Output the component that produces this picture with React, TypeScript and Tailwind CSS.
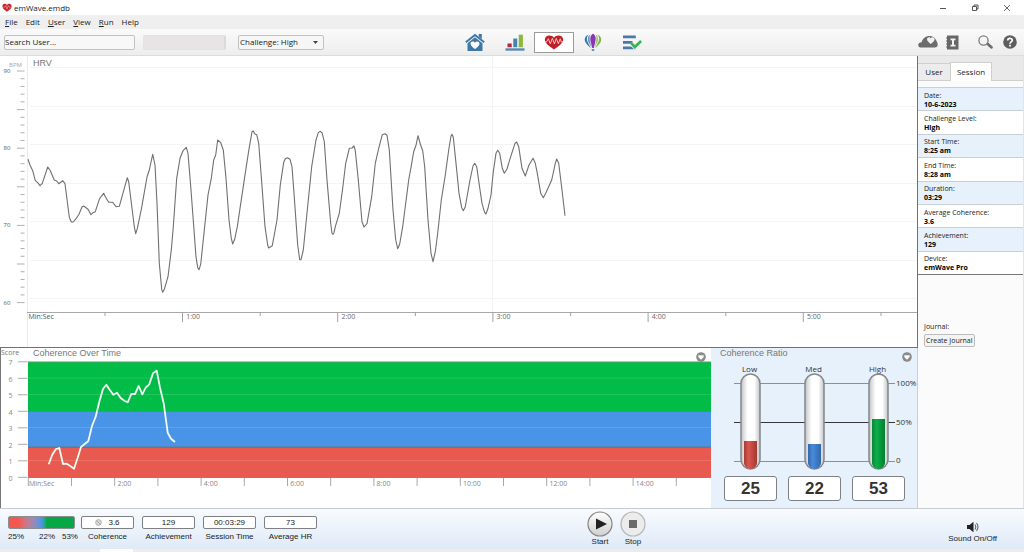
import React from "react";

const SANS = "font-['Open_Sans','Noto_Sans',sans-serif]";

const HRV_POINTS =
  "28,103.3 30,109 32.7,114.7 35.3,124.7 37.7,126.7 40,129.7 42.3,127.3 47.7,111 50,114 54.3,124 56.7,125 58.7,127.7 62.7,124.7 65,127.7 69.3,161.3 71.3,166 73.3,166 76,162.7 79,158.3 82,151 83.7,150 88,153.3 91,158.7 93,156.7 95.3,155.7 99.3,143.3 101.3,140.3 103.7,137.3 105.3,140.7 108.7,146.3 112.7,146.3 116,150.7 119.3,150.3 127.3,121.7 128.7,125.7 134.3,170.7 135.7,177.7 137.3,172.7 141.7,151.3 147,121 149.3,114 152.7,98.3 155,109 157,147.3 159.3,207.3 161.7,233.3 162.7,236.3 164.3,233.3 168,220.7 171.3,194 173.3,170.7 176.7,122.3 180,102.3 183.3,94.3 186.3,91.3 188,97.3 191,134 196,200.7 197.7,211.7 199,213.7 200.7,208.3 208,139 211.3,122.3 213.7,104 215.7,99 217.7,84 220.7,86.7 223.3,94 226,122.3 229,164 231.3,182.3 232.7,188 234.7,183.3 237.3,170.7 244,125.7 248.3,97.3 252,75.7 253.3,75 254.7,77.7 256.7,78.7 258.7,87.3 261.3,120.7 265,170.7 267.7,189 268.7,192 272.3,189.7 277,164 280.3,129 283.7,106.3 285.3,102.7 287.3,101.7 290,103.3 292,110.7 294,137.3 297.7,189 299.7,203.7 301,203.7 303.3,194 307.3,154 311.7,110.7 316,84 318.3,76.7 320,75.3 322,76.7 324.3,85.7 327,124 330.7,167.3 332,177.3 333,178.3 334,176.7 335.3,170.7 339.3,157.3 342.7,132.3 345.7,107.3 349.3,92.3 352,92 354,90 355.3,94.7 358,120.7 362,165.7 364,171 367,167.7 371.7,140.7 375.3,107.3 378.7,92.3 382.3,78.7 385,77.7 387,79.3 389.3,94 393,154 395.7,184 397.7,192.7 399.7,188 402.7,170.7 408.7,124 411,111.3 413.7,95.7 416,89.3 418,79.7 420.3,88 422.7,94.7 424.7,110.7 428,164 431,197.3 433,205.7 435.3,195.7 437.7,177.3 441.3,144 445.3,119 448.7,94 451,80 452,78.3 453.3,81.3 456,107.3 459,137.3 461.7,151.7 463.3,154.7 465.3,150.7 470,124 473,110 474.7,107.3 476.7,110.7 479.3,129 482,147.3 484.7,156.7 486,158 488,152.3 491,139 493.3,115.7 496,97.3 497.7,94.3 499.7,97.3 502.3,112.3 504.3,117.3 507,113 510.7,100.7 515,87.3 516.7,86 518.7,90.7 522,112.3 525.3,120 529,109 533,102.3 535.3,107.3 537.3,117.3 540.7,137.3 543.3,141.7 545.7,137.3 551.7,124 555.3,107.3 556.7,103 558.7,107.3 562,134 565,159.7";

const COHERENCE_POINTS =
  "48.7,116.3 52.3,106.7 56,101 59.3,100 63,116 66.7,115.7 70.3,118 74,120.7 77.7,109.7 81,99 84.7,96 88.3,93 92,78 95.7,68.7 99.3,53.7 103,41 106.3,36.7 110,42.3 113.3,46.7 117,44.7 120.7,50 124.3,52.7 127.7,54.3 131.3,46 135,46 138.7,38 142.3,46.3 145.7,39.7 149.3,36.3 153,25.3 156.7,22.7 160,39.7 163.7,55.3 167.7,84.7 171,90.7 175,94";

const HEART =
  "M12 21.3C5 15.8 1 12.2 1 7.6 1 4.2 3.6 2 6.6 2 8.8 2 10.8 3.2 12 5.2 13.2 3.2 15.2 2 17.4 2 20.4 2 23 4.2 23 7.6 23 12.2 19 15.8 12 21.3Z";

const MENU = ["File", "Edit", "User", "View", "Run", "Help"];

const SESSION = [
  ["Date:", "10-6-2023"],
  ["Challenge Level:", "High"],
  ["Start Time:", "8:25 am"],
  ["End Time:", "8:28 am"],
  ["Duration:", "03:29"],
  ["Average Coherence:", "3.6"],
  ["Achievement:", "129"],
  ["Device:", "emWave Pro"],
];

const READOUTS = [
  ["Coherence", "3.6"],
  ["Achievement", "129"],
  ["Session Time", "00:03:29"],
  ["Average HR", "73"],
];

const RATIOS = [
  { label: "Low", value: 25, x: 39, top: 93, fill: "url(#low)" },
  { label: "Med", value: 22, x: 103, top: 96, fill: "url(#med)" },
  { label: "High", value: 53, x: 167, top: 71, fill: "url(#high)" },
];

function TitleBar() {
  return (
    <header className="flex h-[15px] items-center bg-white pl-[2px] pr-[13px]">
      <svg viewBox="0 0 24 24" className="h-[10px] w-[10px]" aria-hidden="true">
        <path d={HEART} fill="#c8202c" />
        <path d="M3 10h4l2-4 3 9 3-9 2 4h4" fill="none" stroke="#f0a0a5" strokeWidth="1.6" />
      </svg>
      <h1 className="ml-[2px] text-[8px] leading-[12px] text-[#222]">emWave.emdb</h1>
      <div className="ml-auto flex items-center gap-6">
        <button aria-label="Minimize" className="h-2 w-2">
          <svg viewBox="0 0 8 8" className="h-2 w-2"><path d="M1 4.500h6" stroke="#555" fill="none" /></svg>
        </button>
        <button aria-label="Restore" className="h-2 w-2">
          <svg viewBox="0 0 8 8" className="h-2 w-2"><path d="M1.500 2.500h4v4h-4zM3 2.500V1h4v4H5.500" stroke="#444" strokeWidth=".9" fill="none" /></svg>
        </button>
        <button aria-label="Close" className="h-2 w-2">
          <svg viewBox="0 0 8 8" className="h-2 w-2"><path d="M1 1l6 6M7 1L1 7" stroke="#444" strokeWidth=".8" fill="none" /></svg>
        </button>
      </div>
    </header>
  );
}

function MenuBar() {
  return (
    <nav className="flex h-[14px] items-center gap-2 bg-[#efefef] pl-[5px]">
      {MENU.map((item) => (
        <button key={item} className="text-[8px] leading-[12px] text-[#222]">
          {item === "Edit" || item === "Help" ? (
            item
          ) : (
            <>
              <span className="underline">{item[0]}</span>
              {item.slice(1)}
            </>
          )}
        </button>
      ))}
    </nav>
  );
}

function Toolbar() {
  return (
    <div className="flex h-[27px] items-center border-b border-[#dcdcdc] bg-linear-to-b from-[#fafafa] to-[#ededed] pl-1 pr-[7px]">
      <input
        aria-label="Search User"
        placeholder="Search User..."
        className="h-[15px] w-[131px] rounded-[2px] border border-[#c2c2c2] bg-[#f8f8f8] px-0 pb-px text-[8px] text-[#222] placeholder:text-[#222]"
      />
      <input
        aria-label="Selected user"
        readOnly
        className="ml-2 h-[15px] w-[83px] rounded-[2px] border border-r-2 border-[#e6e2e3] border-r-[#dadada] bg-[#e8e4e5] text-[8px]"
      />
      <div className="relative ml-[12px]">
        <select
          aria-label="Challenge level"
          className="block h-[15px] w-[86px] appearance-none rounded-[2px] border border-[#c2c2c2] bg-[#f6f6f6] px-px text-[8px] leading-[12px] text-[#222]"
        >
          <option>Challenge: High</option>
        </select>
        <svg viewBox="0 0 5 3" className="pointer-events-none absolute right-[6px] top-[6px] h-[3px] w-[5px]">
          <path d="M0 0h5L2.500 3z" fill="#444" />
        </svg>
      </div>

      <div className="ml-[139px] flex items-center">
        <button aria-label="Home" className="flex w-[24px] justify-center">
          <svg viewBox="0 0 20 19" className="h-[19px] w-[20px]">
            <path d="M13.800 1h3v5l-3-2.500z" fill="#3f78a6" />
            <path d="M.8 9.300L10 1.900l9.200 7.400" fill="none" stroke="#3f78a6" strokeWidth="1.900" />
            <path d="M2.500 10.300L10 4.300l7.500 6V18h-15z" fill="#3f78a6" />
            <path d="M10 16C7.500 14 5.500 12.600 5.500 10.700c0-2.600 3.500-3.100 4.500-.8 1-2.300 4.500-1.800 4.500.8C14.500 12.600 12.500 14 10 16z" fill="#fff" />
          </svg>
        </button>
        <button aria-label="Progress" className="ml-4 flex w-[24px] justify-center">
          <svg viewBox="0 0 20 19" className="h-[19px] w-[20px]">
            <path d="M.5 15.300h19v2.400H.5z" fill="#5b8ab0" />
            <path d="M2.500 10.500h4.200v3.700H2.500z" fill="#b5283c" />
            <path d="M8.300 5.500h3.900v8.700H8.300z" fill="#4a80ad" />
            <path d="M13.700 1.700h4.200v12.500h-4.200z" fill="#8ab83c" />
          </svg>
        </button>
        <button
          aria-label="Heart rhythm session"
          className="ml-[7px] flex h-[21px] w-[40px] items-center justify-center border border-[#9b9b9b] bg-white"
        >
          <svg viewBox="0 0 24 22" preserveAspectRatio="none" className="h-[16px] w-[20px]">
            <path d={HEART} fill="#bf1f27" />
            <path d="M1.500 10.500l1.500.5 2.200-4.500 2.400 7 2.400-7.500 2.500 7.500L14.700 6l2.500 7.500 2.300-7 1.300 4.500 2-.5" fill="none" stroke="#f3c7c7" strokeWidth="1.200" />
          </svg>
        </button>
        <button aria-label="Games" className="ml-[7px] flex w-[24px] justify-center">
          <svg viewBox="0 0 18 19" className="h-[19px] w-[18px]">
            <path d="M4.600 1.800C.6 3 .2 6.800 1.300 9c1.300 2.500 3.500 4.300 5.400 6.200L3.300 8C2.500 5.500 3 3.300 4.600 1.800z" fill="#3f78b0" />
            <path d="M13.400 1.800c4 1.200 4.400 5 3.300 7.200-1.300 2.500-3.500 4.300-5.400 6.200L14.700 8c.8-2.500.3-4.700-1.300-6.200z" fill="#7fb54c" />
            <path d="M6.500 1.300C3.800 3 3.400 6 4.300 8.500L7.500 15 5.800 7.500C5.400 5 5.600 3 6.500 1.300z" fill="#5f94c6" />
            <path d="M11.500 1.300c2.700 1.700 3.100 4.700 2.200 7.200L10.500 15l1.700-7.500c.4-2.500.2-4.500-.7-6.200z" fill="#9cc86a" />
            <path d="M9 .8C5.700 2.500 6 6.500 7 10l1.200 5h1.600L11 10c1-3.500 1.300-7.500-2-9.200z" fill="#8a34b8" />
            <path d="M7.500 15.900h3L10 18H8z" fill="#6b8fae" />
          </svg>
        </button>
        <button aria-label="Assessment" className="ml-[15px] flex w-[24px] justify-center">
          <svg viewBox="0 0 20 19" className="h-[19px] w-[20px]">
            <path d="M1 2.500h12.800v2.800H1zM1 8h9.500v2.800H1zM1 13.500h12.800v2.800H1z" fill="#4a78a8" />
            <path d="M8.800 10.200l3.700 3.800 6.500-6.500" fill="none" stroke="#f5f5f5" strokeWidth="4" />
            <path d="M8.800 9.700l4 4.300 6.300-6" fill="none" stroke="#35b558" strokeWidth="2.700" />
          </svg>
        </button>
      </div>

      <div className="ml-auto flex items-center">
        <button aria-label="Cloud">
          <svg viewBox="0 0 20 14" className="h-[14px] w-[20px]">
            <path d="M3.500 12.500C1.500 12.500.2 11.500.2 9.900.2 8.200 1.800 7.300 3.600 7.200 4.800 3.500 7.500 1 11.500 1c3 0 5 1.300 6.200 3.600.9 1.700 2 3.200 2 4.900 0 2-1 3-3 3z" fill="#6c6c6c" />
            <path d="M12.800 9C10.600 7.300 9 6 9 4.300c0-2.400 3-2.800 3.800-.9.8-1.900 3.800-1.500 3.800.9C16.600 6 15 7.300 12.800 9z" fill="#f2f2f2" />
          </svg>
        </button>
        <button aria-label="Information" className="ml-2">
          <svg viewBox="0 0 13 15" className="h-[15px] w-[13px]">
            <path d="M1 .5h11.500v14H1z" fill="#686868" />
            <path d="M0 3h2M0 6h2M0 9h2M0 12h2" stroke="#686868" strokeWidth="1.200" />
            <path d="M4.500 3.500h5v1.700H8v4.600h1.500v1.700h-5V9.800H6V5.200H4.500z" fill="#f4f4f4" />
          </svg>
        </button>
        <button aria-label="Search" className="ml-[19px]">
          <svg viewBox="0 0 15 14" className="h-[14px] w-[15px]">
            <circle cx="5.500" cy="5.500" r="4.600" fill="none" stroke="#7c7c7c" strokeWidth="1.300" />
            <path d="M10 9.200l3.400 3" stroke="#6c6c6c" strokeWidth="2.800" strokeLinecap="round" />
          </svg>
        </button>
        <button aria-label="Help" className="ml-[10px]">
          <svg viewBox="0 0 14 14" className="h-[14px] w-[14px]">
            <circle cx="7" cy="7" r="6.800" fill="#5f5f5f" />
            <path d="M4.700 5.600C4.700 2.500 9.400 2.600 9.300 5.400 9.200 6.900 7 7 7 8.700" fill="none" stroke="#fff" strokeWidth="1.700" />
            <path d="M6.100 9.700h1.800v1.700H6.100z" fill="#fff" />
          </svg>
        </button>
      </div>
    </div>
  );
}

function HrvChart() {
  const bpmTicks = Array.from({ length: 31 }, (_, i) => i);
  return (
    <section aria-label="HRV" className="border-b border-r border-[#6f7275] bg-white">
      <svg className="block h-[291px] w-full">
        <path d="M27.500 0v291" stroke="#ebebeb" />
        <path d="M492.500 0v256" stroke="#f3f3f3" />
        {[11, 50, 88, 127, 165, 204, 242].map((y) => (
          <line key={y} x1="30" x2="100%" y1={y + 0.5} y2={y + 0.5} stroke="#f4f4f4" />
        ))}
        {bpmTicks.map((i) => (
          <line key={i} x1={i % 5 === 0 ? 17 : 20.5} x2="24.500" y1={15 + i * 7.72} y2={15 + i * 7.72} stroke="#b0b0b0" />
        ))}
        {[90, 80, 70, 60].map((bpm, i) => (
          <text key={bpm} x="3.500" y={17 + i * 77.2} className="fill-[#555] text-[6px]">{bpm}</text>
        ))}
        <text x="9" y="11" className="fill-[#a5a5a5] text-[6px]">BPM</text>
        <text x="33" y="10" className="fill-[#777] font-['Liberation_Sans',sans-serif] text-[9px]">HRV</text>
        <line x1="27" x2="100%" y1="256.500" y2="256.500" stroke="#a8a8a8" />
        {[1, 2, 3, 4, 5].map((m) => (
          <g key={m}>
            <line x1={27.3 + m * 155.2} x2={27.3 + m * 155.2} y1="256" y2="266" stroke="#a0a0a0" />
            <text x={31 + m * 155.2} y="263" className="fill-[#666] text-[7px]">{m}:00</text>
          </g>
        ))}
        {[0, 1, 2, 3, 4, 5].map((m) => (
          <line key={m} x1={105 + m * 155.2} x2={105 + m * 155.2} y1="256" y2="260" stroke="#a0a0a0" />
        ))}
        <text x="28.500" y="263" className="fill-[#555] text-[7px]">Min:Sec</text>
        <polyline points={HRV_POINTS} fill="none" stroke="#707070" strokeWidth="1.100" strokeLinejoin="round" />
      </svg>
    </section>
  );
}

function ExpandButton({ label }: { label: string }) {
  return (
    <button aria-label={label} className="h-[10px] w-[10px]">
      <svg viewBox="0 0 10 10" className="h-[10px] w-[10px]">
        <circle cx="5" cy="5" r="4.800" fill="#8a8a8a" />
        <path d="M2.300 3.200h5.400v1.800L5 7.800 2.300 5z" fill="#fff" />
      </svg>
    </button>
  );
}

function CoherenceChart() {
  return (
    <section aria-labelledby="cot" className="flex min-w-0 flex-1 flex-col border-l border-[#777] bg-white">
      <div className="flex h-[10px] items-start pr-[5px] text-[#777]">
        <span className="w-8 text-[7px] leading-[9px]">Score</span>
        <h2 id="cot" className="font-['Liberation_Sans',sans-serif] text-[9px] leading-[11px]">Coherence Over Time</h2>
        <div className="ml-auto flex pt-1">
          <ExpandButton label="Coherence over time options" />
        </div>
      </div>
      <svg viewBox="0 0 710 149" preserveAspectRatio="xMinYMin slice" className="block h-[149px] w-full flex-none">
        <g transform="translate(-1 -10)">
          <svg x="28" y="13" width="683" height="120">
            <rect width="100%" height="50" y="1" fill="#02bc48" />
            <rect width="100%" height="36" y="51" fill="#4a94e8" />
            <rect width="100%" height="29" y="87" fill="#e85a4f" />
            <rect width="100%" height="1" y="0.500" fill="#4f9f5f" />
            <rect width="100%" height="1.500" y="85.500" fill="#5c7c8c" />
            <rect width="100%" height="1" y="116" fill="#a07c78" />
            <rect width="100%" height="1" y="50" fill="#2aa088" />
            {[17, 33.5, 66.5, 99.5].map((y) => (
              <line key={y} x1="0" x2="100%" y1={y} y2={y} stroke="#fff" strokeOpacity=".13" />
            ))}
          </svg>
          {[7, 6, 5, 4, 3, 2, 1, 0].map((v, i) => (
            <g key={v}>
              <line x1="18" x2="27.500" y1={13.8 + i * 16.5} y2={13.8 + i * 16.5} stroke="#aaa" />
              <text x="8.500" y={17 + i * 16.5} className="fill-[#888] text-[7px]">{v}</text>
            </g>
          ))}
          {Array.from({ length: 16 }, (_, i) => (
            <line key={i} x1={28.3 + i * 43.2} x2={28.3 + i * 43.2} y1="130" y2="138" stroke="#a8a8a8" />
          ))}
          {[2, 4, 6, 8, 10, 12, 14].map((m) => (
            <text key={m} x={31 + m * 43.2} y="137.500" className="fill-[#888] text-[7px]">{m}:00</text>
          ))}
          <text x="29" y="137.500" className="fill-[#888] text-[7px]">Min:Sec</text>
          <polyline points={COHERENCE_POINTS} fill="none" stroke="#f1fbf3" strokeWidth="1.800" strokeLinejoin="round" />
        </g>
      </svg>
    </section>
  );
}

function RatioPanel() {
  return (
    <section aria-labelledby="ratio" className="w-[207px] flex-none border-r border-[#c9cfd5] bg-[#e6f1fb]">
      <div className="flex h-[13px] items-start pl-[9px] pr-[5px]">
        <h2 id="ratio" className="font-['Liberation_Sans',sans-serif] text-[9px] leading-[11px] text-[#777]">Coherence Ratio</h2>
        <div className="ml-auto flex pt-1">
          <ExpandButton label="Coherence ratio options" />
        </div>
      </div>
      <svg viewBox="0 13 206 114" className="block h-[114px] w-[206px]">
        <defs>
          <linearGradient id="tube"><stop offset="0" stopColor="#c4c4c8" /><stop offset=".35" stopColor="#fff" /><stop offset=".7" stopColor="#fff" /><stop offset="1" stopColor="#c4c4c8" /></linearGradient>
          <linearGradient id="low"><stop offset="0" stopColor="#a83a34" /><stop offset=".35" stopColor="#d8574e" /><stop offset="1" stopColor="#a53830" /></linearGradient>
          <linearGradient id="med"><stop offset="0" stopColor="#2f68b0" /><stop offset=".35" stopColor="#4a8ad8" /><stop offset="1" stopColor="#2f68b0" /></linearGradient>
          <linearGradient id="high"><stop offset="0" stopColor="#058a34" /><stop offset=".35" stopColor="#0cae4a" /><stop offset="1" stopColor="#048030" /></linearGradient>
        </defs>
        <path d="M23 35.500h161M23 113.500h161" stroke="#8a9096" />
        <path d="M23 74.500h161" stroke="#34383c" />
        {RATIOS.map((r) => (
          <g key={r.label}>
            <text x={r.x - 0.5} y="23.500" textAnchor="middle" className="fill-[#333] text-[8px]">{r.label}</text>
            <rect x={r.x - 9} y="26" width="19" height="95" rx="9.500" fill="url(#tube)" stroke="#84868a" strokeWidth="1.500" />
            <path d={`M${r.x - 6} ${r.top}h13V115a6.500 6 0 0 1-13 0z`} fill={r.fill} />
          </g>
        ))}
        <text x="185" y="38" className="fill-[#333] text-[8px]">100%</text>
        <text x="185" y="77" className="fill-[#333] text-[8px]">50%</text>
        <text x="185" y="115" className="fill-[#333] text-[8px]">0</text>
      </svg>
      <div className="flex gap-[11px] pl-[13px] pt-px">
        {RATIOS.map((r) => (
          <output
            key={r.label}
            aria-label={r.label}
            className="flex h-[25px] w-[53px] items-center justify-center rounded-[3px] border border-[#7d8185] bg-white font-['Liberation_Sans',sans-serif] text-[17px] leading-[20px] font-bold text-[#333]"
          >
            {r.value}
          </output>
        ))}
      </div>
    </section>
  );
}

function Sidebar() {
  return (
    <aside className="flex w-[106px] flex-none flex-col border-r border-[#e4e4e4] bg-[#fbfbfb]">
      <div role="tablist" className="flex h-[25px] items-end border-b border-[#cfcfcf] bg-[#e9e9e9] text-[8px] leading-[12px] text-[#222]">
        <button role="tab" aria-selected="false" className="h-[17px] w-8 border-t border-[#cfcfcf] bg-[#ececec]">User</button>
        <button role="tab" aria-selected="true" className="-mb-px h-[19px] w-[42px] border border-b-0 border-[#cfcfcf] bg-white">Session</button>
      </div>
      <dl className="mt-[6px] grid h-[188px] auto-rows-fr border-b border-[#777] text-[7px] leading-[9px] text-[#222]">
        {SESSION.map(([label, value]) => (
          <div key={label} className="flex flex-col justify-center border-t border-[#c8d0d6] pl-[6px] pt-px odd:bg-[#e6f1fb] even:bg-white">
            <dt>{label}</dt>
            <dd className="font-bold text-black">{value}</dd>
          </div>
        ))}
      </dl>
      <div className="flex flex-col items-start gap-[3px] pl-[6px] pt-[47px] text-[7px] leading-[9px] text-[#222]">
        <span>Journal:</span>
        <button className="h-[13px] rounded-[2px] border border-[#bdbdbd] bg-[#f4f4f4] px-px">Create Journal</button>
      </div>
    </aside>
  );
}

function Footer() {
  return (
    <footer className="flex h-[41px] items-start border-t border-[#c8ccd0] bg-linear-to-b from-[#f8fbfe] to-[#dfeaf7] pl-2 font-['Liberation_Sans',sans-serif] text-[8px] leading-[10px] text-[#222]">
      <div className="w-[70px] pt-[7px]">
        <div className="h-[13px] w-[67px] rounded-[2px] border border-[#8a8f94] bg-linear-to-r from-[#f4574e] from-15% via-[#4a94e8] via-50% to-[#05a845] to-58%" />
        <div className="mt-[3px] flex justify-between">
          <span>25%</span>
          <span className="pl-2">22%</span>
          <span>53%</span>
        </div>
      </div>
      <div className="ml-[3px] flex gap-2 pt-[7px]">
        {READOUTS.map(([label, value]) => (
          <div key={label} className="flex w-[53px] flex-col items-center">
            <output
              aria-label={label}
              className="flex h-[13px] w-full items-center justify-center gap-[6px] rounded-[2px] border border-[#7d8185] bg-white"
            >
              {label === "Coherence" && (
                <svg viewBox="0 0 8 8" className="h-[7px] w-[7px]">
                  <circle cx="4" cy="4" r="3.300" fill="#ddd" stroke="#999" strokeWidth=".8" />
                  <path d="M2 2l4 4" stroke="#888" strokeWidth=".8" />
                </svg>
              )}
              {value}
            </output>
            <span className="mt-[3px] whitespace-nowrap">{label}</span>
          </div>
        ))}
      </div>
      <div className="ml-[270px] flex gap-[7px] pt-[2px]">
        <button className="flex w-[26px] flex-col items-center">
          <svg viewBox="0 0 26 26" className="h-[26px] w-[26px]">
            <defs><linearGradient id="btn" x2="0" y2="1"><stop offset="0" stopColor="#fff" /><stop offset="1" stopColor="#cfcfcf" /></linearGradient></defs>
            <circle cx="13" cy="13" r="12" fill="url(#btn)" stroke="#858585" strokeWidth="1.200" />
            <path d="M9 7.500l11 5.500-11 5.500z" fill="#222" />
          </svg>
          <span>Start</span>
        </button>
        <button className="flex w-[26px] flex-col items-center">
          <svg viewBox="0 0 26 26" className="h-[26px] w-[26px]">
            <circle cx="13" cy="13" r="12" fill="#ececec" stroke="#b5b5b5" strokeWidth="1.200" />
            <path d="M9 9h8v8H9z" fill="#6a6a6a" />
          </svg>
          <span>Stop</span>
        </button>
      </div>
      <button className="ml-auto mr-[27px] flex flex-col items-center gap-px pt-3">
        <svg viewBox="0 0 12 12" className="h-3 w-3">
          <path d="M0 4h2.500L6.500.8v10.400L2.500 8H0z" fill="#222" />
          <path d="M8 3.500q1.500 2.500 0 5M9.500 2q3 4 0 8" fill="none" stroke="#666" strokeWidth="1.100" />
        </svg>
        <span>Sound On/Off</span>
      </button>
    </footer>
  );
}

export default function App() {
  return (
    <div className={`flex min-h-screen flex-col bg-white ${SANS}`}>
      <TitleBar />
      <MenuBar />
      <Toolbar />
      <main className="flex flex-1">
        <div className="flex min-w-0 flex-1 flex-col">
          <HrvChart />
          <div className="flex flex-1">
            <CoherenceChart />
            <RatioPanel />
          </div>
        </div>
        <Sidebar />
      </main>
      <Footer />
      <div className="flex h-[3px] bg-[#efebea] pl-[100px]">
        <div className="w-[33px] bg-white" />
      </div>
    </div>
  );
}
